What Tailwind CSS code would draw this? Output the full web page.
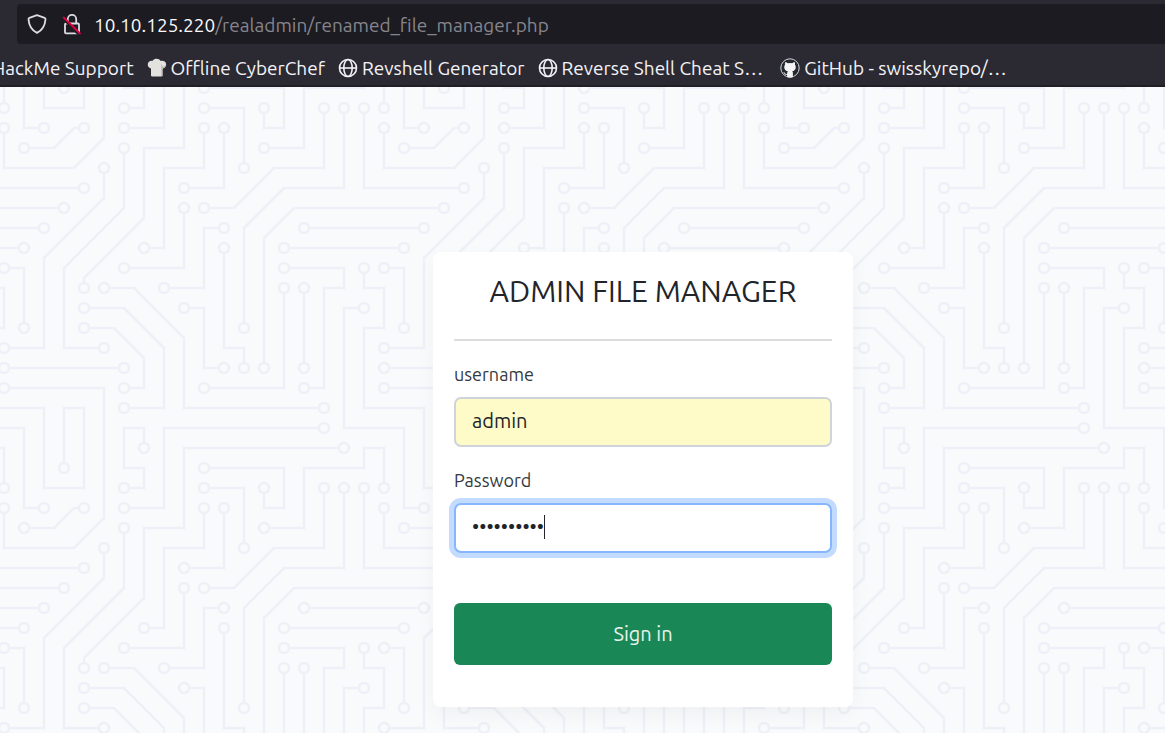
<!DOCTYPE html>
<html lang="en">
<head>
<meta charset="utf-8">
<meta name="viewport" content="width=device-width, initial-scale=1">
<title>Admin File Manager</title>
<script src="https://cdn.jsdelivr.net/npm/@tailwindcss/browser@4"></script>
</head>
<body class="flex min-h-screen flex-col overflow-x-hidden bg-[#f8fafc] font-['Ubuntu','Noto_Sans',sans-serif] text-[#212529]">

<header class="border-b-2 border-[#211f26] bg-[#2b2a33] pt-1 text-[#f4f3f8]">
  <div class="ml-[17px] flex h-10 items-center rounded-l bg-[#1c1b22] pl-[10px]">
    <button type="button" aria-label="Tracking protection" class="mr-[15px] text-[#dddce2]">
      <svg class="h-5 w-5" viewBox="0 0 20 20" fill="none" stroke="currentColor" stroke-width="1.8" stroke-linejoin="round"><path d="M10 1.2 L17.6 3.8 C18.4 4.1 18.6 4.6 18.5 5.4 C18 11.500 15 16.500 10 18.900 C5 16.500 2 11.500 1.500 5.400 C1.400 4.600 1.600 4.100 2.400 3.800 Z"/></svg>
    </button>
    <button type="button" aria-label="Connection not secure" class="mr-3 text-[#dddce2]">
      <svg class="h-[22px] w-5" viewBox="0 0 20 22" fill="none" stroke="currentColor" stroke-width="1.8" stroke-linejoin="round"><rect x="3" y="10.500" width="14" height="9.800" rx="1"/><path d="M5.800 10V6a4.200 4.200 0 0 1 8.400 0v4.500"/><path d="M0 4.500 17 22" stroke="#1c1b22" stroke-width="2"/><path d="M1.200 4 18.500 21" stroke="#e2003c" stroke-width="1.800"/></svg>
    </button>
    <input aria-label="Address" value="10.10.125.220/realadmin/renamed_file_manager.php" class="sr-only" type="text" tabindex="-1">
    <span class="pt-px text-[19px] leading-6 whitespace-nowrap text-[#86858c]"><span class="text-[#f9f9fb]">10.10.125.220</span>/realadmin/renamed_file_manager.php</span>
  </div>
  <nav aria-label="Bookmarks" class="flex h-[41px] items-center gap-[13px] pt-[7px] text-[19px] leading-6 whitespace-nowrap">
    <a href="#" class="-ml-2">HackMe Support</a>
    <a href="#" class="flex items-center gap-1">
      <svg class="h-5 w-5" viewBox="0 0 20 20"><path fill="#e4e2df" d="M4 10.500C1.500 10 .6 8 .8 6c.3-2.500 2.500-3.800 4.900-3.200C6.800 1.200 8.200.7 9.600.8c1.700 0 3.200.8 4 2.100 2.600-.6 5.200.600 5.500 3 .3 2-1.100 4.100-3.600 4.600V18c0 .8-11.500.8-11.500 0Z"/><path fill="#bdbbb8" d="M14.200 5.500v12.800l1.300-.3v-7.500c2.500-.5 3.900-2.600 3.600-4.600-.4 1.700-1.600 2.700-3.600 2.700Z"/></svg>
      <span>Offline CyberChef</span>
    </a>
    <a href="#" class="flex items-center gap-1">
      <svg class="h-5 w-5" viewBox="0 0 20 20" fill="none" stroke="currentColor" stroke-width="1.600"><circle cx="10" cy="10" r="8.500"/><ellipse cx="10" cy="10" rx="4.200" ry="8.500"/><path d="M1.500 10h17"/></svg>
      <span>Revshell Generator</span>
    </a>
    <a href="#" class="flex items-center gap-1">
      <svg class="h-5 w-5" viewBox="0 0 20 20" fill="none" stroke="currentColor" stroke-width="1.600"><circle cx="10" cy="10" r="8.500"/><ellipse cx="10" cy="10" rx="4.200" ry="8.500"/><path d="M1.500 10h17"/></svg>
      <span>Reverse Shell Cheat S…</span>
    </a>
    <a href="#" class="ml-1 flex items-center gap-1">
      <svg class="h-5 w-5" viewBox="0 0 20 20"><circle cx="10" cy="10" r="9.200" fill="#24292f" stroke="#d8d8dc" stroke-width="1"/><path fill="#f4f4f6" d="M5.200 4.200c1-.1 2 .5 2.700 1a9 9 0 0 1 4.200 0c.7-.5 1.700-1.100 2.700-1 .4.900.3 1.700.1 2.200 1.700 2.500.9 6.300-2.600 6.700.5.600.6 1.200.6 2v3.900c-1.900.7-4 .7-5.800 0v-2.200c-2 .3-2.500-.7-3-1.600-.3-.500-.5-.700-.9-1 1.200-.3 1.600.6 2.100 1.200.5.600 1.100.7 1.800.4.100-1.200.3-2.100.7-2.700-3.500-.4-4.400-4.200-2.700-6.700-.2-.5-.3-1.300.1-2.200Z"/></svg>
      <span>GitHub - swisskyrepo/…</span>
    </a>
  </nav>
</header>

<main class="relative flex flex-1 items-start justify-center pt-[165px] pb-[26px] pl-[121px]">
  <!-- Circuit board backdrop: a 19 x 19 cell tile, 20px per cell -->
  <svg class="absolute inset-0 h-full w-full" aria-hidden="true">
    <defs>
      <marker id="pad" markerUnits="userSpaceOnUse" markerWidth="1" markerHeight="1" viewBox="-10 -10 20 20" refX="0" refY="0"><circle r="5" fill="#f8fafc" stroke="#edf1f7" stroke-width="2.500"/></marker>
      <g id="traces" transform="scale(20)" fill="none" stroke="#edf1f7" stroke-width=".125" marker-start="url(#pad)" marker-end="url(#pad)">
        <path d="M18 9V10H19V12H18V16H21V20H23V16H22V19"/>
        <path d="M18 11H17V17H20V21H21"/>
        <path d="M19 20V18H18V19H15V22H13"/>
        <path d="M0 15H5V21.500L3.500 23H0V21"/>
        <path d="M1 3H2.500L3.500 2H4"/>
        <path d="M18 1V5H23"/>
        <path d="M22 6H14.500L13 7.500V14"/>
        <path d="M21 7H15"/>
        <path d="M20 8H14"/>
        <path d="M0 9H1V12"/>
        <path d="M5 4V5.500L2 8.500V13H0"/>
        <path d="M6 3V6L3 9V13H5"/>
        <path d="M17 -1H9V3H7V6.500L4 9.500V10"/>
        <path d="M16 -2H8V2H6"/>
        <path d="M6 1H7V0H6V-2H7V-1"/>
        <path d="M6 16H8V13L6 11H4"/>
        <path d="M6 15H7V13.500L5.500 12H4"/>
        <path d="M5 10H6.500L9 12.500V16H16"/>
        <path d="M0 14H6"/>
        <path d="M10 0H14V2H13V1"/>
        <path d="M10 1H12V4"/>
        <path d="M10 2V4H8V8H7"/>
        <path d="M11 2V5H9"/>
        <path d="M9 6V9H6"/>
        <path d="M10 6H11.500L13.500 4H16V1"/>
        <path d="M17 1V5H14L12 7V12"/>
        <path d="M11 7H10V10H8"/>
        <path d="M11 8V13H12V14"/>
        <path d="M9 11H10V14H11"/>
        <path d="M10 15H14V10"/>
        <path d="M15 10V14"/>
        <path d="M14 9H17V10H16V15H15"/>
      </g>
      <pattern id="board" x="-6" y="-9" width="380" height="380" patternUnits="userSpaceOnUse">
        <g transform="translate(10 10)">
          <use href="#traces" x="-380" y="-380"/><use href="#traces" y="-380"/><use href="#traces" x="380" y="-380"/>
          <use href="#traces" x="-380"/><use href="#traces"/><use href="#traces" x="380"/>
          <use href="#traces" x="-380" y="380"/><use href="#traces" y="380"/><use href="#traces" x="380" y="380"/>
        </g>
      </pattern>
    </defs>
    <rect width="100%" height="100%" fill="url(#board)"/>
  </svg>

  <form onsubmit="return false" class="relative w-full max-w-[420px] rounded-lg bg-white px-[21px] pt-[19px] pb-[42px] shadow-[0_8px_20px_rgba(0,0,0,0.04)]">
    <h1 class="text-center text-[30px] leading-10">ADMIN FILE MANAGER</h1>
    <hr class="mt-7 border-t-2 border-[#dcdddd]">
    <label for="username" class="mt-[19px] block text-[18px] leading-7 text-[#343a40]">username</label>
    <input id="username" type="text" value="admin" class="mt-[9px] block h-[50px] w-full rounded-[7px] border-2 border-[#ced4da] bg-[#fffbc8] px-4 pb-1 text-[20px] leading-7 outline-none">
    <label for="password" class="mt-[19px] block text-[18px] leading-7 text-[#343a40]">Password</label>
    <div class="relative mt-[9px]">
      <input id="password" type="password" value="realadmin1" class="block h-[50px] w-full rounded-[7px] border-2 border-[#86b7fe] bg-white px-4 pb-1 text-[20px] leading-7 caret-transparent ring-[5px] ring-[#c2dbfe] outline-none">
      <span class="absolute top-3 left-[90px] h-6 w-px bg-[#212529]" aria-hidden="true"></span>
    </div>
    <button type="submit" class="mt-[50px] block h-[62px] w-full rounded-md bg-[#1a8856] text-[20px] leading-7 text-[#e9f4ee]">Sign in</button>
  </form>
</main>
</body>
</html>
